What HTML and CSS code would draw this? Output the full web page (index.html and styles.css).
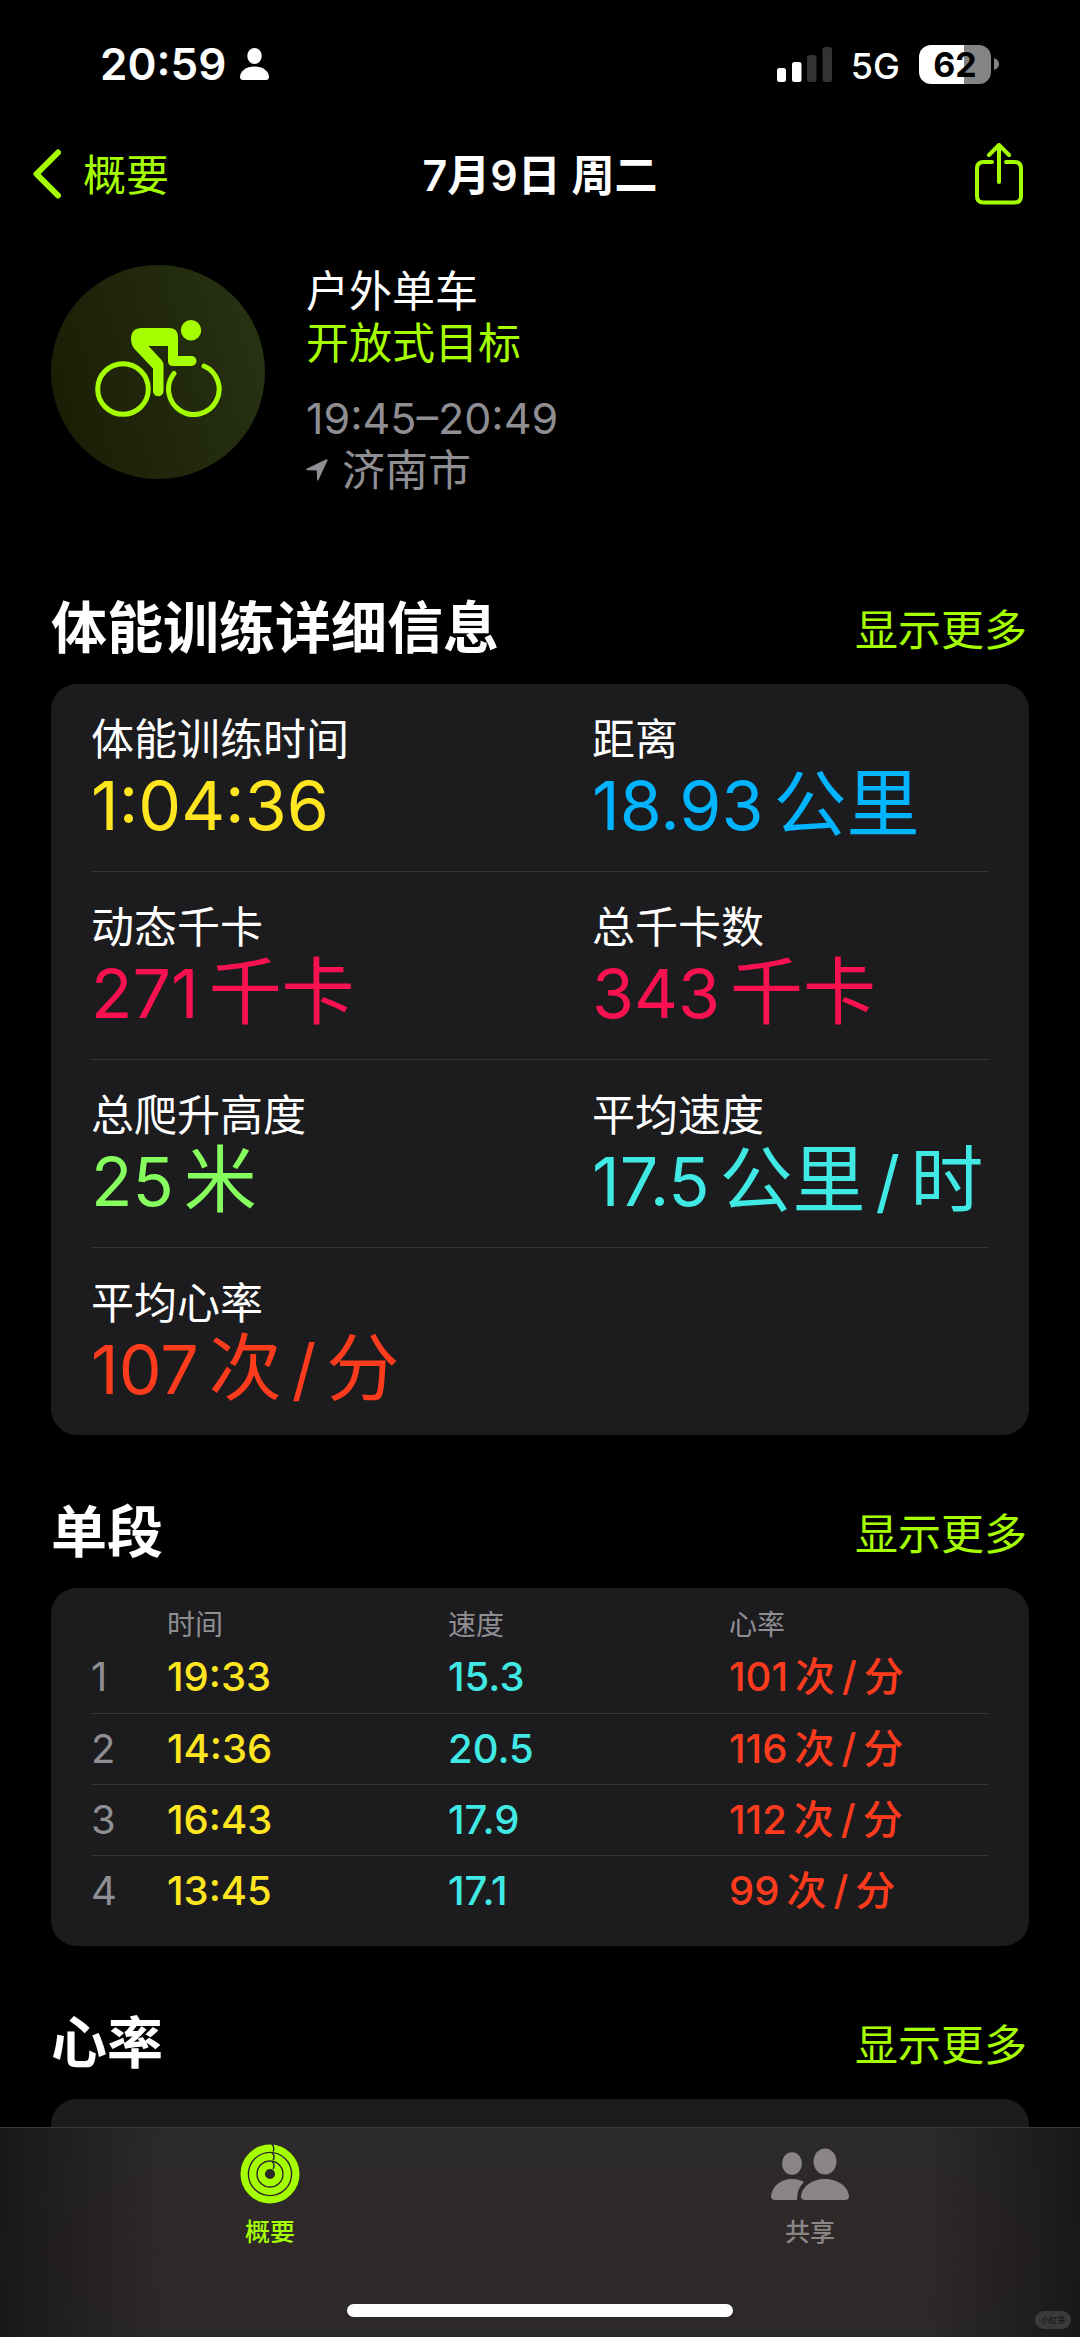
FILE: index.html
```html
<!DOCTYPE html>
<html lang="zh-CN">
<head>
<meta charset="utf-8">
<meta name="viewport" content="width=device-width, initial-scale=1">
<title>7月9日 周二</title>
<link rel="stylesheet" href="styles.css">
</head>
<body>
<div class="app">
  <div class="status-bar">
    <div class="status-left">
      <span class="clock">20:59</span>
      <svg class="person-icon" viewBox="0 0 29 32" aria-hidden="true"><ellipse cx="14.500" cy="8" rx="7.200" ry="8"/><path d="M3 32Q0 32 0 29C0 23.500 6 18.500 14.500 18.500S29 23.500 29 29Q29 32 26 32Z"/></svg>
    </div>
    <div class="status-right">
      <svg class="signal-icon" viewBox="0 0 55 35" aria-hidden="true"><rect x="0" y="21" width="9" height="14" rx="2.500"/><rect x="15" y="15" width="9.500" height="20" rx="2.500"/><rect class="dim" x="30" y="8" width="9.500" height="27" rx="2.500"/><rect class="dim" x="45.500" y="0" width="9.500" height="35" rx="2.500"/></svg>
      <span class="network">5G</span>
      <span class="battery"><span class="battery-level">62</span><svg class="battery-tip" viewBox="0 0 5 12" aria-hidden="true"><path d="M0 0Q5 2 5 6T0 12Z"/></svg></span>
    </div>
  </div>

  <header class="nav-bar">
    <a class="back" href="#summary">
      <svg class="chevron" viewBox="0 0 28 50" aria-hidden="true"><path d="M25 3.500L3.500 25L25 46.500"/></svg>
      <span class="nav-text">概要</span>
    </a>
    <h1 class="title nav-text">7月9日 周二</h1>
    <button class="share" type="button" aria-label="共享体能训练">
      <svg viewBox="0 0 48 62" aria-hidden="true"><path d="M17 19H8.500Q2 19 2 25.500V53Q2 59.500 8.500 59.500H39.500Q46 59.500 46 53V25.500Q46 19 39.500 19H31M24 39V2.500M14 12L24 2L34 12"/></svg>
    </button>
  </header>

  <main class="content">
    <section class="workout">
      <div class="workout-badge">
        <svg viewBox="0 0 127 97" aria-hidden="true">
          <circle class="wheel" cx="28" cy="69" r="25.300"/>
          <path class="wheel" d="M79 53.500A25.300 25.300 0 1 0 109 46"/>
          <circle cx="96" cy="10.300" r="10.200"/>
          <path d="M47 8H74Q83 8 83 17V36H96.500A5 5 0 0 1 96.500 46H78Q73 46 73 41V26H53.500L66.500 40Q68.500 42.500 68.500 45V71A5.200 5.200 0 0 1 58 71V48.500L40.500 30Q36 25.500 36 19Q36 8 47 8Z"/>
        </svg>
      </div>
      <div class="workout-text">
        <p class="workout-name">户外单车</p>
        <p class="workout-goal">开放式目标</p>
        <p class="workout-meta workout-time">19:45–20:49</p>
        <p class="workout-meta workout-place">
          <svg viewBox="0 0 22 22" aria-hidden="true"><path d="M20.500.300Q22 0 21.500 1.500L12.500 21Q11.500 22.500 11 20.500L10.800 11.500L1 11.200Q-.800 10.700 1 9.600Z"/></svg>
          <span>济南市</span>
        </p>
      </div>
    </section>

    <section class="section">
      <div class="section-head">
        <h2>体能训练详细信息</h2>
        <a href="#details">显示更多</a>
      </div>
      <div class="card">
        <dl class="stat-row">
          <div class="stat"><dt>体能训练时间</dt><dd class="yellow">1:04:36</dd></div>
          <div class="stat"><dt>距离</dt><dd class="blue">18.93 <span class="unit">公里</span></dd></div>
        </dl>
        <dl class="stat-row">
          <div class="stat"><dt>动态千卡</dt><dd class="pink">271 <span class="unit">千卡</span></dd></div>
          <div class="stat"><dt>总千卡数</dt><dd class="pink">343 <span class="unit">千卡</span></dd></div>
        </dl>
        <dl class="stat-row">
          <div class="stat"><dt>总爬升高度</dt><dd class="green">25 <span class="unit">米</span></dd></div>
          <div class="stat"><dt>平均速度</dt><dd class="cyan">17.5 <span class="unit">公里</span> / <span class="unit">时</span></dd></div>
        </dl>
        <dl class="stat-row">
          <div class="stat"><dt>平均心率</dt><dd class="red">107 <span class="unit">次</span> / <span class="unit">分</span></dd></div>
        </dl>
      </div>
    </section>

    <section class="section">
      <div class="section-head">
        <h2>单段</h2>
        <a href="#laps">显示更多</a>
      </div>
      <div class="card laps-card">
        <table class="laps">
          <thead>
            <tr><td class="lap-number"></td><th scope="col">时间</th><th scope="col">速度</th><th scope="col" class="lap-heart">心率</th></tr>
          </thead>
          <tbody>
            <tr><th scope="row">1</th><td class="yellow">19:33</td><td class="cyan">15.3</td><td class="red"><span class="rate">101 <span>次</span> / <span>分</span></span></td></tr>
            <tr><th scope="row">2</th><td class="yellow">14:36</td><td class="cyan">20.5</td><td class="red"><span class="rate">116 <span>次</span> / <span>分</span></span></td></tr>
            <tr><th scope="row">3</th><td class="yellow">16:43</td><td class="cyan">17.9</td><td class="red"><span class="rate">112 <span>次</span> / <span>分</span></span></td></tr>
            <tr><th scope="row">4</th><td class="yellow">13:45</td><td class="cyan">17.1</td><td class="red"><span class="rate">99 <span>次</span> / <span>分</span></span></td></tr>
          </tbody>
        </table>
      </div>
    </section>

    <section class="section">
      <div class="section-head">
        <h2>心率</h2>
        <a href="#heart">显示更多</a>
      </div>
      <div class="card heart-card"></div>
    </section>
  </main>

  <footer class="tab-bar">
    <nav class="tabs">
      <a class="tab active" href="#summary" aria-current="page">
        <svg class="rings-icon" viewBox="0 0 60 60" aria-hidden="true">
          <circle cx="30" cy="30" r="25.900"/><circle cx="30" cy="30" r="17.300"/><circle cx="30" cy="30" r="8.700"/>
          <path d="M32 0Q35 4 33 7.500M32 8.500Q35.500 12.500 33 16.200M32 17.200Q35.500 21 33 25"/>
        </svg>
        <span>概要</span>
      </a>
      <a class="tab" href="#sharing">
        <svg class="people-icon" viewBox="0 0 78 60" aria-hidden="true">
          <ellipse cx="21" cy="19.500" rx="10" ry="11.200"/>
          <path d="M4 56Q0 56 0 52C1 42 10 35 21 35Q28 35 33 38Q26 44 26 56Z"/>
          <ellipse cx="54" cy="17.500" rx="11.500" ry="13"/>
          <path d="M34 56Q30 56 30 52C31 42 42 35 54 35S77 42 78 52Q78 56 74 56Z"/>
        </svg>
        <span>共享</span>
      </a>
    </nav>
    <div class="home-indicator"></div>
    <span class="watermark">小红书</span>
  </footer>
</div>
</body>
</html>
```
FILE: styles.css
```css
:root {
  --lime: #a6ff00;
  --card: #1c1c1e;
  --divider: #343436;
  --muted: #8e8e93;
}

* {
  box-sizing: border-box;
}

body {
  margin: 0;
  background: #000;
  color: #fff;
  font-family: Inter, "Noto Sans CJK SC", sans-serif;
  font-size: 43px;
}

h1, h2, p, dl, dd {
  margin: 0;
}

a {
  color: var(--lime);
  text-decoration: none;
}

svg {
  display: block;
  fill: currentColor;
}

.app {
  display: flex;
  flex-direction: column;
  height: 100vh;
}

/* Status bar */
.status-bar {
  display: flex;
  align-items: center;
  justify-content: space-between;
  height: 128px;
  padding: 0 81px 0 100px;
}

.status-left,
.status-right {
  display: flex;
  align-items: center;
}

.status-left {
  gap: 14px;
}

.clock {
  font-size: 44px;
  font-weight: 600;
}

.person-icon {
  width: 29px;
  height: 32px;
}

.signal-icon {
  width: 55px;
  height: 35px;
}

.dim {
  fill: #333;
}

.network {
  margin: 0 19px;
  padding-top: 3px;
  font-size: 36px;
  font-weight: 500;
}

.battery {
  display: flex;
  align-items: center;
  gap: 3px;
  color: #848484;
}

.battery-level {
  width: 72px;
  border-radius: 12px;
  background: linear-gradient(to right, #fff 62%, #848484 62%);
  color: #000;
  font-size: 34px;
  font-weight: 700;
  line-height: 39px;
  text-align: center;
}

.battery-tip {
  width: 5px;
  height: 12px;
}

/* Navigation bar */
.nav-bar {
  display: grid;
  grid-template-columns: 1fr auto 1fr;
  align-items: center;
  height: 92px;
  padding: 0 33px;
}

.nav-text {
  padding-bottom: 5px;
}

.back {
  display: flex;
  align-items: center;
  gap: 22px;
}

.chevron {
  width: 28px;
  height: 50px;
  fill: none;
  stroke: currentColor;
  stroke-width: 6;
  stroke-linecap: round;
  stroke-linejoin: round;
}

.title {
  font-size: 43px;
  font-weight: 600;
}

.share {
  justify-self: end;
  margin-right: 24px;
  padding: 0;
  border: 0;
  background: none;
  color: var(--lime);
}

.share svg {
  width: 48px;
  height: 62px;
  fill: none;
  stroke: currentColor;
  stroke-width: 4;
  stroke-linecap: round;
  stroke-linejoin: round;
}

/* Scrolling content */
.content {
  display: flex;
  flex: 1;
  flex-direction: column;
  min-height: 0;
  overflow: hidden;
  padding: 45px 51px 0;
}

.workout {
  display: flex;
  gap: 41px;
  margin-bottom: 35px;
}

.workout-badge {
  display: grid;
  place-items: center;
  width: 214px;
  height: 214px;
  border-radius: 50%;
  background: linear-gradient(75deg, #1a1c04, #283314);
  color: var(--lime);
}

.workout-badge svg {
  width: 127px;
  height: 97px;
  margin-bottom: 8px;
}

.wheel {
  fill: none;
  stroke: currentColor;
  stroke-width: 5;
  stroke-linecap: round;
}

.workout-text {
  line-height: 52px;
}

.workout-goal {
  color: var(--lime);
}

.workout-meta {
  color: var(--muted);
}

.workout-time {
  margin-top: 23px;
}

.workout-place {
  display: flex;
  align-items: center;
  gap: 14px;
}

.workout-place svg {
  width: 22px;
  height: 22px;
}

.section {
  display: flex;
  flex-direction: column;
  flex-shrink: 0;
  gap: 20px;
  margin-top: 61px;
}

.section-head {
  display: flex;
  align-items: center;
  justify-content: space-between;
  padding-right: 2px;
  line-height: 72px;
}

.section-head h2 {
  font-size: 56px;
  font-weight: 700;
}

.section-head a {
  padding-top: 4px;
  line-height: 68px;
}

.card {
  padding: 0 40px;
  border-radius: 26px;
  background: var(--card);
}

/* Workout details */
.stat-row {
  display: grid;
  grid-template-columns: repeat(2, minmax(0, 1fr));
  column-gap: 104px;
  padding: 29px 0 26px;
}

.stat-row + .stat-row {
  border-top: 1px solid var(--divider);
}

.stat {
  white-space: nowrap;
}

.stat dt {
  line-height: 52px;
}

.stat dd {
  display: flex;
  align-items: baseline;
  gap: 10px;
  font-size: 68px;
  line-height: 80px;
}

.unit {
  font-size: 73px;
  line-height: 76px;
}

.yellow {
  color: #ffe620;
}

.blue {
  color: #00b4ff;
}

.pink {
  color: #fa114f;
}

.green {
  color: #86ff5e;
}

.cyan {
  color: #41e9e4;
}

.red {
  color: #ff3b1d;
}

/* Laps */
.laps-card {
  padding-top: 20px;
  padding-bottom: 20px;
}

.laps {
  width: 100%;
  border-collapse: collapse;
  table-layout: fixed;
  white-space: nowrap;
}

.laps th,
.laps td {
  padding: 0;
  text-align: left;
}

.laps th {
  color: var(--muted);
  font-weight: 400;
}

.lap-number {
  width: 76px;
}

.laps thead th {
  width: 281px;
  font-size: 28px;
  line-height: 34px;
}

.laps thead .lap-heart {
  width: auto;
}

.laps tbody th,
.laps tbody td {
  height: 71px;
  font-size: 40px;
  line-height: 60px;
}

.laps tbody td {
  font-weight: 500;
}

.laps tbody tr + tr {
  border-top: 1px solid var(--divider);
}

.rate {
  display: flex;
  align-items: baseline;
  gap: 7px;
}

.heart-card {
  height: 400px;
}

/* Tab bar */
.tab-bar {
  position: relative;
  display: flex;
  flex-direction: column;
  align-items: center;
  justify-content: space-between;
  height: 210px;
  padding: 16px 0 20px;
  border-top: 1px solid #3b393a;
  background:
    linear-gradient(to right, rgba(20, 20, 21, .8), rgba(20, 20, 21, 0) 15%, rgba(20, 20, 21, 0) 86%, rgba(20, 20, 21, .8)),
    linear-gradient(#2b2a2b, #302828 60%, #2c2929);
}

.tabs {
  display: flex;
  width: 100%;
}

.tab {
  display: flex;
  flex: 1;
  flex-direction: column;
  align-items: center;
  gap: 11px;
  color: #8b8686;
  font-size: 25px;
  font-weight: 500;
  line-height: 34px;
}

.tab.active {
  color: var(--lime);
}

.rings-icon {
  width: 60px;
  height: 60px;
  fill: none;
}

.rings-icon circle {
  stroke: currentColor;
  stroke-width: 7.2;
}

.rings-icon path {
  stroke: #2b292a;
  stroke-width: 1.5;
}

.people-icon {
  width: 78px;
  height: 60px;
}

.home-indicator {
  width: 386px;
  height: 13px;
  border-radius: 7px;
  background: #fff;
}

.watermark {
  position: absolute;
  right: 9px;
  bottom: 8px;
  padding: 0 6px;
  border-radius: 9px;
  background: #3a3a3b;
  color: #1b1b1c;
  font-size: 8px;
  font-weight: 700;
  line-height: 18px;
}
```
